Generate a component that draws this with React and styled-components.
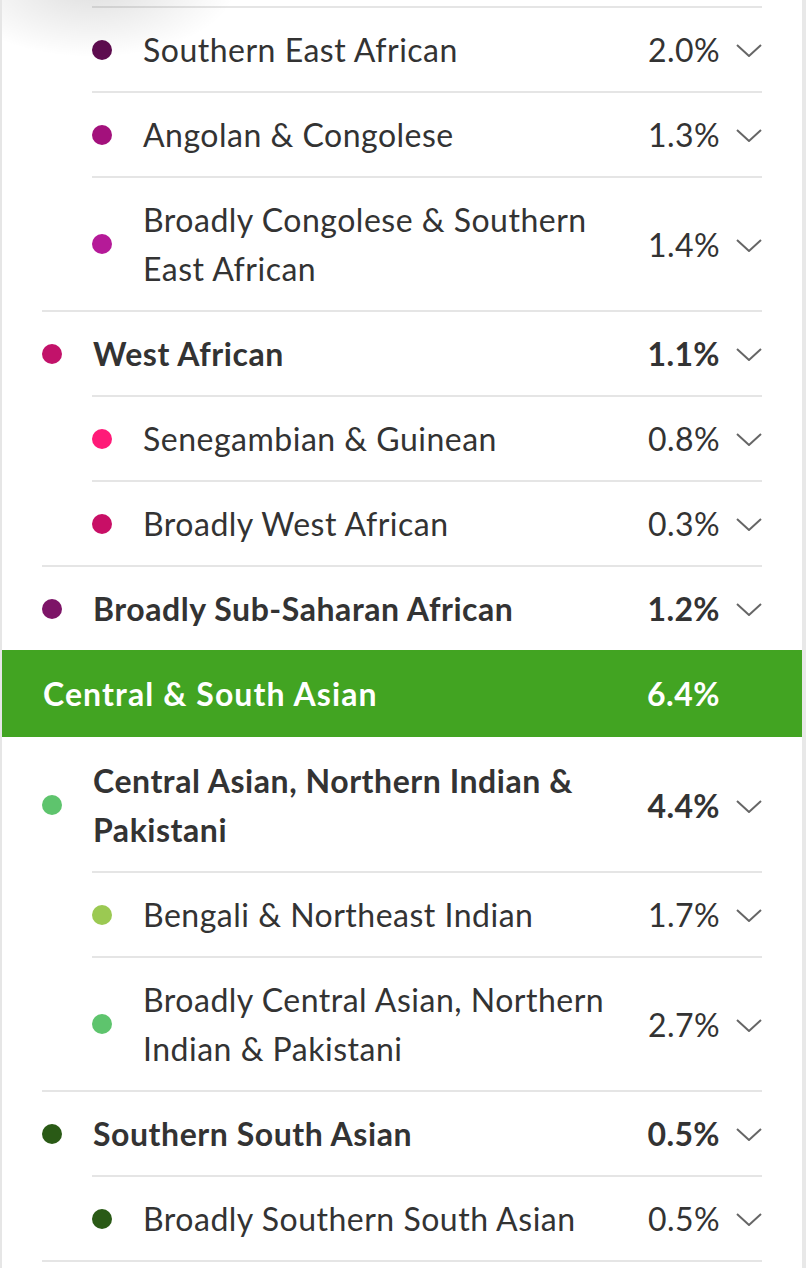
import styled, { createGlobalStyle } from "styled-components";

const GlobalStyle = createGlobalStyle`
  * { box-sizing: border-box; }
  body {
    margin: 0;
    background: #ffffff;
    font-family: Lato, "Open Sans", sans-serif;
    color: #333333;
  }
`;

const sections = [
  {
    rows: [
      { level: 1, color: "#5e0c4f", name: ["Southern East African"], pct: "2.0%" },
      { level: 1, color: "#a3117c", name: ["Angolan & Congolese"], pct: "1.3%" },
      { level: 1, color: "#b51a98", name: ["Broadly Congolese & Southern", "East African"], pct: "1.4%" },
      { level: 0, color: "#c2126a", name: ["West African"], pct: "1.1%" },
      { level: 1, color: "#ff1a78", name: ["Senegambian & Guinean"], pct: "0.8%" },
      { level: 1, color: "#c80f66", name: ["Broadly West African"], pct: "0.3%" },
      { level: 0, color: "#7d1467", name: ["Broadly Sub-Saharan African"], pct: "1.2%" },
    ],
  },
  {
    title: "Central & South Asian",
    pct: "6.4%",
    rows: [
      { level: 0, color: "#5ec46d", name: ["Central Asian, Northern Indian &", "Pakistani"], pct: "4.4%" },
      { level: 1, color: "#9bc952", name: ["Bengali & Northeast Indian"], pct: "1.7%" },
      { level: 1, color: "#5ec46d", name: ["Broadly Central Asian, Northern", "Indian & Pakistani"], pct: "2.7%" },
      { level: 0, color: "#2a5a16", name: ["Southern South Asian"], pct: "0.5%" },
      { level: 1, color: "#2a5a16", name: ["Broadly Southern South Asian"], pct: "0.5%" },
    ],
  },
];

function Chevron() {
  return (
    <ChevronBox viewBox="0 0 26 13" width="26" height="13">
      <polyline points="1,1 13,12 25,1" fill="none" stroke="#666" strokeWidth="2" />
    </ChevronBox>
  );
}

export default function App() {
  return (
    <>
      <GlobalStyle />
      <Page>
        {sections.map((section, si) => (
          <Section key={si}>
            {section.title && (
              <Header>
                <HeaderTitle>{section.title}</HeaderTitle>
                <HeaderPct>{section.pct}</HeaderPct>
              </Header>
            )}
            {section.rows.map((row, ri) => (
              <Row key={ri} $level={row.level} $hidden={section.title && ri === 0}>
                <Dot $color={row.color} />
                <Label $bold={row.level === 0}>
                  {row.name.map((line, li) => (
                    <span key={li}>
                      {li > 0 && <br />}
                      {line}
                    </span>
                  ))}
                </Label>
                <Pct $bold={row.level === 0}>{row.pct}</Pct>
                <Chevron />
              </Row>
            ))}
          </Section>
        ))}
        <EndLine />
      </Page>
    </>
  );
}

const Page = styled.div`
  position: relative;
  width: 806px;
  min-height: 1268px;
  padding-top: 6px;
  border-left: 2px solid #e6e6e6;
  border-right: 4px solid #e8e8e8;
  overflow: hidden;
  &::before {
    content: "";
    position: absolute;
    left: -60px;
    top: -90px;
    width: 300px;
    height: 150px;
    background: radial-gradient(ellipse at center, rgba(0, 0, 0, 0.13), rgba(0, 0, 0, 0) 68%);
    pointer-events: none;
  }
`;

const Section = styled.div`
  display: flex;
  flex-direction: column;
`;

const Header = styled.div`
  display: flex;
  align-items: center;
  justify-content: space-between;
  height: 87px;
  padding: 0 82px 0 41px;
  background: #42a422;
  color: #ffffff;
  font-size: 32px;
  font-weight: 700;
  letter-spacing: 1.1px;
`;

const HeaderTitle = styled.div``;

const HeaderPct = styled.div`
  letter-spacing: 0.5px;
`;

const Row = styled.div`
  display: flex;
  align-items: center;
  margin: 0 40px 0 ${(p) => (p.$level === 0 ? 40 : 90)}px;
  padding: 17px 0;
  border-top: 2px solid ${(p) => (p.$hidden ? "transparent" : "#e5e5e5")};
  font-size: 32px;
  line-height: 49px;
`;

const Dot = styled.span`
  flex: none;
  width: 20px;
  height: 20px;
  border-radius: 50%;
  background: ${(p) => p.$color};
  margin-right: 31px;
`;

const Label = styled.div`
  flex: 1;
  font-weight: ${(p) => (p.$bold ? 700 : 400)};
  letter-spacing: ${(p) => (p.$bold ? 0.55 : 0.5)}px;
`;

const Pct = styled.div`
  font-weight: ${(p) => (p.$bold ? 700 : 400)};
  letter-spacing: 0.4px;
`;

const ChevronBox = styled.svg`
  flex: none;
  margin-left: 16px;
  margin-top: 2px;
`;

const EndLine = styled.div`
  margin: 0 40px;
  border-top: 2px solid #e5e5e5;
`;
